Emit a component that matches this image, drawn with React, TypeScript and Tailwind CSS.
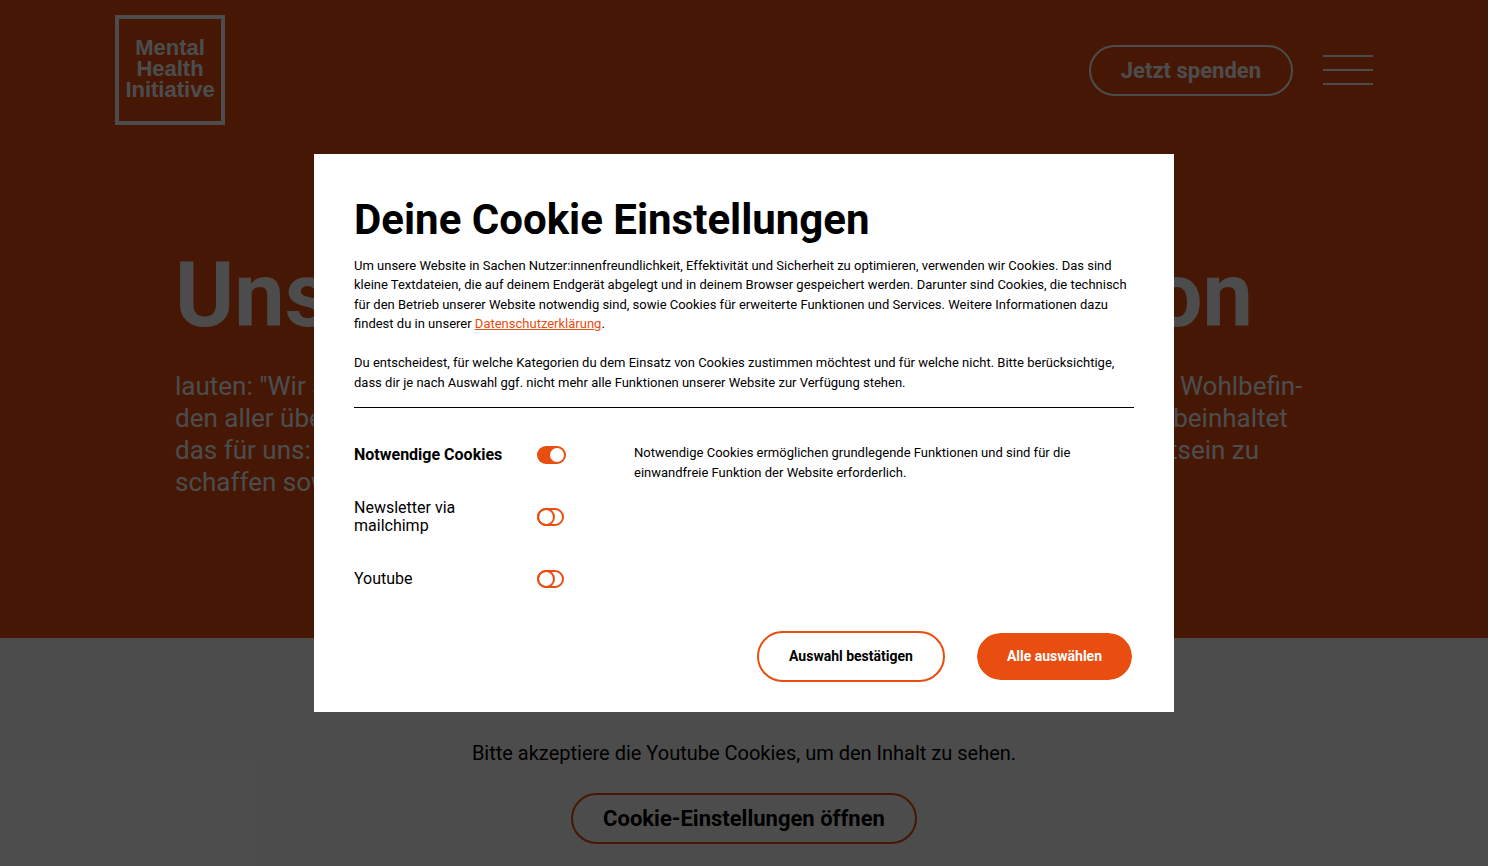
import React, { useState } from "react";

const CATEGORIES = [
  {
    id: "necessary",
    label: "Notwendige Cookies",
    description:
      "Notwendige Cookies ermöglichen grundlegende Funktionen und sind für die einwandfreie Funktion der Website erforderlich.",
  },
  { id: "mailchimp", label: "Newsletter via mailchimp" },
  { id: "youtube", label: "Youtube" },
];

export default function App() {
  return (
    <div className="min-h-screen bg-white pr-3 font-[Roboto,sans-serif] text-black">
      <div className="relative h-screen overflow-hidden">
        <Hero />
        <VideoConsent />
        <div className="absolute inset-0 flex items-center justify-center bg-black/70">
          <CookieDialog />
        </div>
      </div>
    </div>
  );
}

function Hero() {
  return (
    <div className="bg-[#e84e0f] pb-35 text-white">
      <header className="flex items-center justify-between px-[115px] pt-[15px]">
        <Logo />
        <div className="flex items-center gap-[30px]">
          <button className="rounded-full border-2 border-white px-[30px] py-[10px] text-[22px] leading-[27px] font-bold">
            Jetzt spenden
          </button>
          <button aria-label="Menü" className="flex w-[50px] flex-col gap-3">
            <span className="h-[2px] bg-white"></span>
            <span className="h-[2px] bg-white"></span>
            <span className="h-[2px] bg-white"></span>
          </button>
        </div>
      </header>
      <div className="px-[175px] pt-[121px]">
        <h1 className="text-[90px] leading-[100px] font-bold whitespace-nowrap">Unsere Vision und Mission</h1>
        <p className="mt-6 text-[26px] leading-8 whitespace-nowrap">
          lauten: "Wir als Mental Health Initiative werden das psychische, soziale und emotionale Wohlbefin-
          <br />
          den aller über das gesamte Leben hinweg nachhaltig fördern und wirklich stärken. Das beinhaltet
          <br />
          das für uns: Wissen zu vermitteln, Vorurteile abzubauen und ein neues, breites Bewusstsein zu
          <br />
          schaffen sowie Angebote zu stärken."
        </p>
      </div>
    </div>
  );
}

function Logo() {
  return (
    <a
      href="#"
      className="flex h-[110px] w-[110px] flex-col items-center border-4 border-white pt-[18px] font-['Liberation_Sans',sans-serif] text-[22px] leading-[21px] font-bold"
    >
      <span>Mental</span>
      <span>Health</span>
      <span>Initiative</span>
    </a>
  );
}

function VideoConsent() {
  return (
    <section className="mx-auto mt-[62px] flex w-fit flex-col items-center bg-[#fdfdfd] px-9 pt-10 pb-10">
      <p className="text-xl leading-[26px]">Bitte akzeptiere die Youtube Cookies, um den Inhalt zu sehen.</p>
      <button className="mt-[27px] rounded-full border-2 border-[#e84e0f] px-[30px] py-[10px] text-[22px] leading-[27px] font-bold">
        Cookie-Einstellungen öffnen
      </button>
    </section>
  );
}

function CookieDialog() {
  const [accepted, setAccepted] = useState<Record<string, boolean>>({ necessary: true });

  const acceptAll = () => setAccepted({ necessary: true, mailchimp: true, youtube: true });

  return (
    <div role="dialog" aria-labelledby="cookie-title" className="w-[860px] max-w-full bg-white px-10 pt-10 pb-[30px]">
      <h2 id="cookie-title" className="text-[42px] leading-[52px] font-bold">
        Deine Cookie Einstellungen
      </h2>
      <div className="mt-[10px] border-b border-black pb-[15px] text-[13px] leading-normal">
        <p>
          Um unsere Website in Sachen Nutzer:innenfreundlichkeit, Effektivität und Sicherheit zu optimieren, verwenden
          wir Cookies. Das sind kleine Textdateien, die auf deinem Endgerät abgelegt und in deinem Browser gespeichert
          werden. Darunter sind Cookies, die technisch für den Betrieb unserer Website notwendig sind, sowie Cookies für
          erweiterte Funktionen und Services. Weitere Informationen dazu findest du in unserer{" "}
          <a href="#" className="text-[#e84e0f] underline">
            Datenschutzerklärung
          </a>
          .
        </p>
        <br />
        <p>
          Du entscheidest, für welche Kategorien du dem Einsatz von Cookies zustimmen möchtest und für welche nicht.
          Bitte berücksichtige, dass dir je nach Auswahl ggf. nicht mehr alle Funktionen unserer Website zur Verfügung
          stehen.
        </p>
      </div>

      <div className="mt-[35px] flex flex-col gap-[14px]">
        {CATEGORIES.map((category) => (
          <CategoryRow
            key={category.id}
            {...category}
            required={category.id === "necessary"}
            checked={!!accepted[category.id]}
            onChange={(checked) => setAccepted({ ...accepted, [category.id]: checked })}
          />
        ))}
      </div>

      <div className="mt-4 flex justify-end gap-[30px] text-sm font-bold">
        <button className="rounded-full border-2 border-[#e84e0f] px-[30px] py-[10px] leading-[27px]">
          Auswahl bestätigen
        </button>
        <button
          onClick={acceptAll}
          className="rounded-full border-2 border-white bg-[#e84e0f] bg-clip-padding px-[30px] py-[10px] leading-[27px] text-white"
        >
          Alle auswählen
        </button>
      </div>
    </div>
  );
}

function CategoryRow({
  id,
  label,
  description,
  required,
  checked,
  onChange,
}: {
  id: string;
  label: string;
  description?: string;
  required: boolean;
  checked: boolean;
  onChange: (checked: boolean) => void;
}) {
  return (
    <div className="flex min-h-12">
      <div className="flex w-[280px] items-start">
        <label
          htmlFor={id}
          className={`flex h-[23px] w-[183px] items-center pr-6 text-base leading-[18px] ${required ? "font-bold" : ""}`}
        >
          {label}
        </label>
        <span className="relative flex h-[23px] items-center">
          <input
            id={id}
            type="checkbox"
            checked={checked}
            disabled={required}
            onChange={(e) => onChange(e.target.checked)}
            className="peer sr-only"
          />
          <label htmlFor={id} aria-hidden="true">
            <Toggle checked={checked} />
          </label>
        </span>
      </div>
      {description && <p className="flex-1 pr-10 text-[13px] leading-normal">{description}</p>}
    </div>
  );
}

function Toggle({ checked }: { checked: boolean }) {
  if (checked) {
    return (
      <svg width="29" height="18" viewBox="0 0 29 18">
        <rect width="29" height="18" rx="9" fill="#e84e0f" />
        <circle cx="20" cy="9" r="7" fill="#fff" />
      </svg>
    );
  }

  return (
    <svg width="27" height="18" viewBox="0 0 27 18" fill="none" stroke="#e84e0f" strokeWidth="2">
      <rect x="1" y="1" width="25" height="16" rx="8" />
      <circle cx="9" cy="9" r="8" />
    </svg>
  );
}
